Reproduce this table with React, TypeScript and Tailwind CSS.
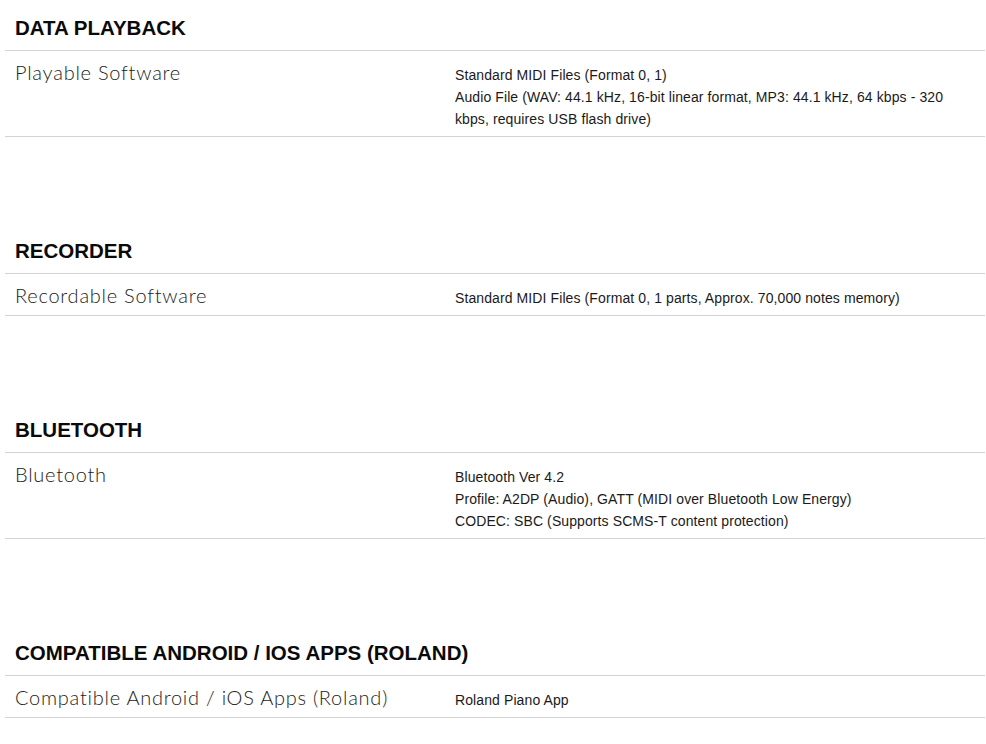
import React from "react";

type Row = { label: string; values: string[] };
type Section = { title: string; rows: Row[] };

const sections: Section[] = [
  {
    title: "DATA PLAYBACK",
    rows: [
      {
        label: "Playable Software",
        values: [
          "Standard MIDI Files (Format 0, 1)",
          "Audio File (WAV: 44.1 kHz, 16-bit linear format, MP3: 44.1 kHz, 64 kbps - 320 kbps, requires USB flash drive)",
        ],
      },
    ],
  },
  {
    title: "RECORDER",
    rows: [
      {
        label: "Recordable Software",
        values: ["Standard MIDI Files (Format 0, 1 parts, Approx. 70,000 notes memory)"],
      },
    ],
  },
  {
    title: "BLUETOOTH",
    rows: [
      {
        label: "Bluetooth",
        values: [
          "Bluetooth Ver 4.2",
          "Profile: A2DP (Audio), GATT (MIDI over Bluetooth Low Energy)",
          "CODEC: SBC (Supports SCMS-T content protection)",
        ],
      },
    ],
  },
  {
    title: "COMPATIBLE ANDROID / IOS APPS (ROLAND)",
    rows: [
      {
        label: "Compatible Android / iOS Apps (Roland)",
        values: ["Roland Piano App"],
      },
    ],
  },
];

export default function App() {
  return (
    <main className="w-full min-h-[744px] bg-white px-[5px] pr-[1px] font-['Liberation_Sans',Arial,sans-serif]">
      {sections.map((s, i) => (
        <section key={s.title} className={i > 0 ? "mt-[86px]" : ""}>
          {/* section heading */}
          <div className="pt-4 pb-[10px] px-[10px] border-b border-[#d3d3d3]">
            <h2 className="text-[20.5px] leading-6 font-bold text-[#0a0a0a]">
              {s.title}
            </h2>
          </div>

          {/* spec rows */}
          {s.rows.map((r) => (
            <div
              key={r.label}
              className="flex items-start py-[6px] px-[10px] border-b border-[#d3d3d3]"
            >
              <div className="w-[440px] shrink-0 mt-[1px] text-[20px] leading-7 font-light tracking-[0.75px] text-[#222] font-['Lato','Noto_Sans',sans-serif]">
                {r.label}
              </div>
              <div className="w-[500px] mt-[7px] text-[14px] leading-[22px] tracking-[0.1px] text-[#1a1a1a]">
                {r.values.map((v) => (
                  <p key={v}>{v}</p>
                ))}
              </div>
            </div>
          ))}
        </section>
      ))}
    </main>
  );
}
